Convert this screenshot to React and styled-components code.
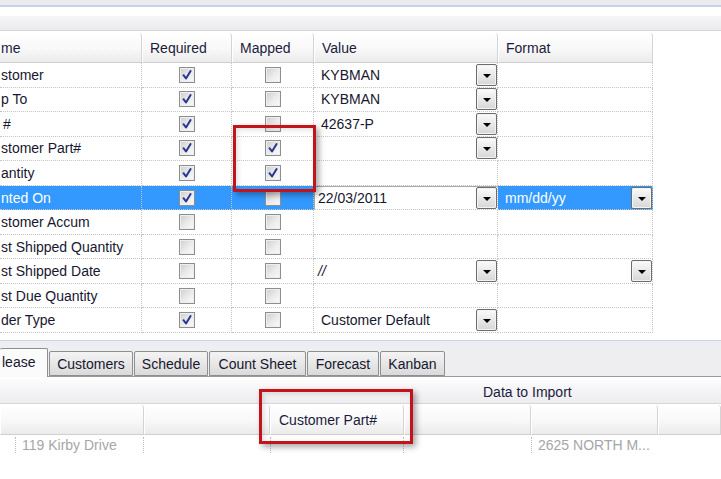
import React from 'react';
import styled, { createGlobalStyle } from 'styled-components';

const GlobalStyle = createGlobalStyle`
  html, body { margin: 0; padding: 0; background: #fff; }
  body { font-family: "Liberation Sans", Arial, sans-serif; }
`;

// the window is scrolled: the Name column shows only the tail of each label
const COLS = '142px 90px 82px 184px 155px';

const fields = [
  { name: 'stomer', req: true, map: false, value: 'KYBMAN', drop: true },
  { name: 'p To', req: true, map: false, value: 'KYBMAN', drop: true },
  { name: '#', req: true, map: false, value: '42637-P', drop: true, indent: 3 },
  { name: 'stomer Part#', req: true, map: true, value: '', drop: true },
  { name: 'antity', req: true, map: true, value: '', drop: false },
  { name: 'nted On', req: true, map: false, value: '22/03/2011', drop: true, format: 'mm/dd/yy', fdrop: true, selected: true },
  { name: 'stomer Accum', req: false, map: false, value: '' },
  { name: 'st Shipped Quantity', req: false, map: false, value: '' },
  { name: 'st Shipped Date', req: false, map: false, value: '//', drop: true, fdrop: true },
  { name: 'st Due Quantity', req: false, map: false, value: '' },
  { name: 'der Type', req: true, map: false, value: 'Customer Default', drop: true },
];

const tabs = [
  { label: 'lease', w: 48, active: true },
  { label: 'Customers', w: 84 },
  { label: 'Schedule', w: 74 },
  { label: 'Count Sheet', w: 97 },
  { label: 'Forecast', w: 72 },
  { label: 'Kanban', w: 65 },
];

const importCols = [
  { w: 144, label: '' },
  { w: 126, label: '' },
  { w: 134, label: 'Customer Part#' },
  { w: 127, label: '' },
  { w: 127, label: '' },
];

const dataCols = [
  { w: 15, text: '' },
  { w: 128, text: '119 Kirby Drive' },
  { w: 127, text: '' },
  { w: 133, text: '' },
  { w: 128, text: '' },
  { w: 127, text: '2625 NORTH M...' },
];

export default function App() {
  return (
    <>
      <GlobalStyle />
      <Viewport>
        <TitleBand />
        <Toolbar />
        <Table>
          <HeaderRow>
            <HeadCell $first>me</HeadCell>
            <HeadCell>Required</HeadCell>
            <HeadCell>Mapped</HeadCell>
            <HeadCell>Value</HeadCell>
            <HeadCell>Format</HeadCell>
          </HeaderRow>
          {fields.map((f) => (
            <Row key={f.name}>
              <Cell $sel={f.selected} $first $indent={f.indent}>{f.name}</Cell>
              <Cell $sel={f.selected} $center><CheckBox checked={f.req} /></Cell>
              <Cell $sel={f.selected} $center><CheckBox checked={f.map} /></Cell>
              {f.selected ? (
                <Cell $value>
                  <Editor>
                    {f.value}
                    <DropButton />
                  </Editor>
                </Cell>
              ) : (
                <Cell $value>
                  <ValueText $italic={f.value === '//'}>{f.value}</ValueText>
                  {f.drop && <DropButton />}
                </Cell>
              )}
              <Cell $sel={f.selected} $value>
                <ValueText>{f.format}</ValueText>
                {f.fdrop && <DropButton />}
              </Cell>
            </Row>
          ))}
        </Table>

        <TabArea>
          {tabs.map((t) => (
            <Tab key={t.label} $w={t.w} $active={t.active}>{t.label}</Tab>
          ))}
        </TabArea>

        <GroupBand>Data to Import</GroupBand>
        <ImportHeader>
          {importCols.map((c, i) => (
            <ImportHeadCell key={i} $w={c.w}>{c.label}</ImportHeadCell>
          ))}
          <ImportHeadCell $fill />
        </ImportHeader>
        <DataRow>
          {dataCols.map((c, i) => (
            <DataCell key={i} $w={c.w} $line={i > 0}>{c.text}</DataCell>
          ))}
        </DataRow>

        <Callout $left={233} $top={125} $w={83} $h={67} />
        <Callout $left={259} $top={389} $w={154} $h={55} />
      </Viewport>
    </>
  );
}

function CheckBox({ checked }) {
  return (
    <Box>
      {checked && (
        <svg width="12" height="12" viewBox="0 0 12 12">
          <path d="M2.5 6.2 L5 9.5 L9.6 2" fill="none" stroke="#27378f" strokeWidth="2" strokeLinecap="round" strokeLinejoin="round" />
        </svg>
      )}
    </Box>
  );
}

function DropButton() {
  return (
    <Drop>
      <Arrow />
    </Drop>
  );
}

const Viewport = styled.div`
  position: relative;
  width: 721px;
  height: 479px;
  overflow: hidden;
  background: #fff;
  display: flex;
  flex-direction: column;
`;

const TitleBand = styled.div`
  height: 5px;
  flex: none;
  background: #ebebef;
  border-bottom: 2px solid #c6d2e7;
  margin-bottom: 9px;
`;

const Toolbar = styled.div`
  height: 14px;
  flex: none;
  background: linear-gradient(#f6f6f8, #ebebee);
  border-bottom: 1px solid #d3d6dc;
  margin-bottom: 2px;
`;

const Table = styled.div`
  width: 653px;
  font-size: 14px;
  color: #17172f;
`;

const HeaderRow = styled.div`
  display: grid;
  grid-template-columns: ${COLS};
  height: 30px;
`;

const HeadCell = styled.div`
  display: flex;
  align-items: center;
  padding-left: ${p => (p.$first ? 1 : 7)}px;
  background: linear-gradient(#ffffff 0%, #f8f8f8 55%, #ebebeb 100%);
  border-left: ${p => (p.$first ? 'none' : '1px solid #ffffff')};
  border-right: 1px solid #d4d4d4;
  border-bottom: 1px solid #cfcfcf;
  border-radius: ${p => (p.$first ? '0 3px 0 0' : '3px 3px 0 0')};
  color: #1b1b3c;
`;

const Row = styled.div`
  display: grid;
  grid-template-columns: ${COLS};
  height: 24.55px;
`;

const Cell = styled.div`
  display: flex;
  align-items: center;
  justify-content: ${p => (p.$center ? 'center' : 'flex-start')};
  padding-left: ${p => (p.$first ? p.$indent ?? 1 : 0)}px;
  border-right: 1px dotted #c4c4c4;
  border-bottom: 1px dotted #c4c4c4;
  background: ${p => (p.$sel ? '#3399ff' : 'transparent')};
  color: ${p => (p.$sel ? '#ffffff' : 'inherit')};
  white-space: nowrap;
  overflow: hidden;
`;

const ValueText = styled.span`
  padding-left: ${p => (p.$italic ? 4 : 7)}px;
  font-style: ${p => (p.$italic ? 'italic' : 'normal')};
  flex: 1;
`;

const Editor = styled.div`
  flex: 1;
  align-self: stretch;
  display: flex;
  align-items: center;
  padding-left: 3px;
  background: #fff;
  border-top: 1px solid #a7a7a7;
  border-left: 1px solid #a7a7a7;
  color: #17172f;
`;

const Box = styled.span`
  width: 16px;
  height: 16px;
  box-sizing: border-box;
  border: 1px solid #8d8e8e;
  background: linear-gradient(135deg, #cdcdcd 0%, #ececec 55%, #fafafa 100%);
  box-shadow: inset 0 0 0 1px #eeeeee;
  display: flex;
  align-items: center;
  justify-content: center;
`;

const Drop = styled.span`
  margin-left: auto;
  width: 21px;
  height: 22px;
  box-sizing: border-box;
  flex: none;
  border: 1px solid #6c6c6c;
  border-radius: 2px;
  background: linear-gradient(#fbfbfb, #d6d6d6);
  box-shadow: inset 0 0 0 1px #f4f4f4;
  display: flex;
  align-items: center;
  justify-content: center;
`;

const Arrow = styled.span`
  width: 0;
  height: 0;
  margin-top: 2px;
  border-left: 4px solid transparent;
  border-right: 4px solid transparent;
  border-top: 4px solid #000;
`;

const TabArea = styled.div`
  margin-top: 7px;
  height: 37px;
  flex: none;
  box-sizing: border-box;
  border-top: 1px solid #c6d3e8;
  border-bottom: 1px solid #9a9a9a;
  background: #eeeef0;
  display: flex;
  align-items: flex-end;
  gap: 1px;
  font-size: 14px;
  color: #17172f;
`;

const Tab = styled.div`
  width: ${p => p.$w}px;
  height: ${p => (p.$active ? 29 : 25)}px;
  margin-bottom: ${p => (p.$active ? -1 : 0)}px;
  box-sizing: border-box;
  border: 1px solid #8f8f8f;
  border-left: ${p => (p.$active ? 'none' : '1px solid #8f8f8f')};
  border-bottom: ${p => (p.$active ? 'none' : '1px solid #8f8f8f')};
  border-radius: 2px 2px 0 0;
  background: ${p => (p.$active ? '#fbfbfb' : 'linear-gradient(#f4f4f4, #dadada)')};
  padding-left: ${p => (p.$active ? 2 : 0)}px;
  padding-bottom: ${p => (p.$active ? 3 : 0)}px;
  display: flex;
  align-items: center;
  justify-content: ${p => (p.$active ? 'flex-start' : 'center')};
  white-space: nowrap;
`;

const GroupBand = styled.div`
  height: 27px;
  flex: none;
  box-sizing: border-box;
  padding-left: 483px;
  padding-top: 3px;
  display: flex;
  align-items: center;
  background: linear-gradient(#ffffff 0%, #f6f6f8 40%, #ededf0 100%);
  border-bottom: 1px solid #d8d8dc;
  font-size: 14px;
  color: #1b1b3c;
`;

const ImportHeader = styled.div`
  display: flex;
  height: 30px;
  flex: none;
  margin-top: 1px;
  font-size: 14px;
  color: #1b1b3c;
`;

const ImportHeadCell = styled.div`
  width: ${p => (p.$fill ? 'auto' : `${p.$w}px`)};
  flex: ${p => (p.$fill ? 1 : 'none')};
  box-sizing: border-box;
  padding-left: 8px;
  display: flex;
  align-items: center;
  white-space: nowrap;
  background: linear-gradient(#ffffff 0%, #f8f8f8 55%, #ebebeb 100%);
  border-left: 1px solid #ffffff;
  border-right: 1px solid #d4d4d4;
  border-bottom: 1px solid #cfcfcf;
  border-radius: 3px 3px 0 0;
`;

const DataRow = styled.div`
  display: flex;
  height: 16px;
  flex: none;
  margin-top: 2px;
  font-size: 14px;
  color: #a6a6a6;
`;

const DataCell = styled.div`
  width: ${p => p.$w}px;
  box-sizing: border-box;
  padding-left: 6px;
  border-left: ${p => (p.$line ? '1px dotted #bdbdbd' : 'none')};
  display: flex;
  align-items: center;
  white-space: nowrap;
  overflow: hidden;
`;

const Callout = styled.div`
  position: absolute;
  left: ${p => p.$left}px;
  top: ${p => p.$top}px;
  width: ${p => p.$w}px;
  height: ${p => p.$h}px;
  box-sizing: border-box;
  border: 3px solid #c3141c;
  box-shadow: 3px 3px 6px rgba(0, 0, 0, 0.35), inset 2px 2px 5px rgba(0, 0, 0, 0.12);
`;
